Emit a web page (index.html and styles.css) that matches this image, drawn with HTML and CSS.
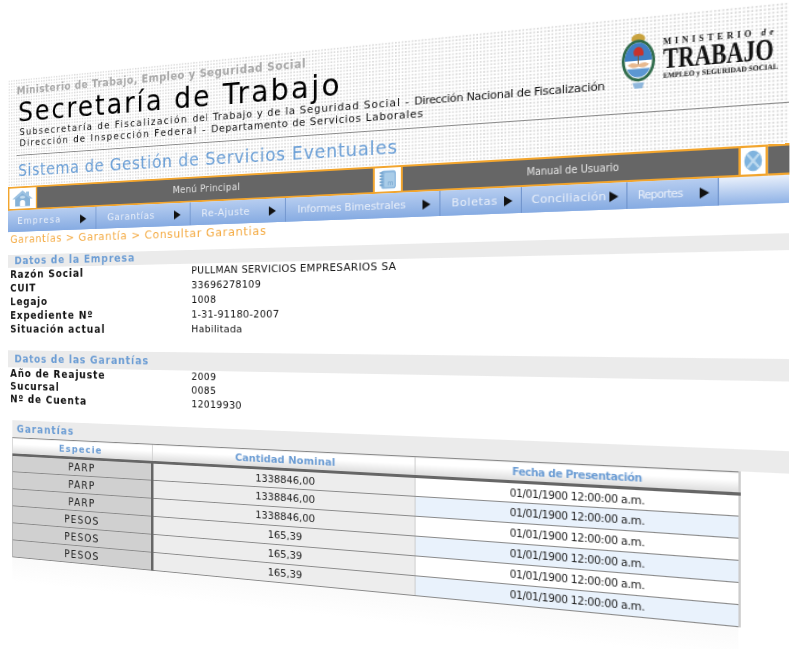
FILE: index.html
```html
<!DOCTYPE html>
<html lang="es">
<head>
  <meta charset="utf-8">
  <title>Consultar Garantías</title>
  <link rel="stylesheet" href="styles.css">
</head>
<body>
  <div class="stage">
    <div class="page">
      <header class="top">
        <p class="ministry">Ministerio de Trabajo, Empleo y Seguridad Social</p>
        <h1 class="title">Secretaría de Trabajo</h1>
        <p class="sub"><span class="wide">Subsecretaría de Fiscalización </span><span class="loose">del Trabajo y de la Seguridad Social - </span><span class="tight">Dirección Nacional de Fiscalización</span></p>
        <p class="sub"><span class="wide">Dirección de Inspección Federal - </span>Departamento de Servicios Laborales</p>
        <div class="rule"></div>
        <h2 class="system">Sistema de Gestión de Servicios Eventuales</h2>
        <div class="logo">
          <svg class="shield" viewBox="0 0 34 57" preserveAspectRatio="none">
            <ellipse cx="17" cy="6" rx="7" ry="5" fill="#c9a33f"/>
            <ellipse cx="17" cy="28" rx="17" ry="21" fill="#2f6b4a"/>
            <ellipse cx="17" cy="28" rx="14" ry="18" fill="#fff"/>
            <path d="M3 28a14 18 0 0 1 28 0z" fill="#3f7fc4"/>
            <path d="M5 36a14 18 0 0 0 24 0z" fill="#5c97d2"/>
            <path d="M17 32V15" stroke="#7a5a33" stroke-width="1"/>
            <path d="M12 20c0-5 5-7 8-5 2 2 3 5 2 8h-9z" fill="#c8322b"/>
            <path d="M6 32c4-3 8-2 11 0 3-2 7-3 11 0-3 3-7 4-11 2-3 2-8 1-11-2z" fill="#e8b98f"/>
            <path d="M11 50h12l-2 6h-8z" fill="#8fb7dc"/>
          </svg>
          <div class="logo-text">
            <span class="logo-min">MINISTERIO <i>de</i></span>
            <span class="logo-main">TRABAJO</span>
            <span class="logo-foot">EMPLEO y SEGURIDAD SOCIAL</span>
          </div>
        </div>
      </header>

      <div class="toolbar">
        <a class="tile tile-home">
          <svg viewBox="0 0 30 24" preserveAspectRatio="none">
            <path d="M15 1 1 13h4v10h20V13h4l-5-4V3h-4v2.500z" fill="#9cc2e2"/>
            <path d="M5 13 15 5l10 8v10H5z" fill="#86b2d8"/>
            <ellipse cx="15" cy="10.500" rx="3.500" ry="2" fill="#c4dcef"/>
            <path d="M11.500 23v-5a3.500 3.500 0 0 1 7 0v5z" fill="#fff"/>
          </svg>
        </a>
        <div class="bar bar-main">Menú Principal</div>
        <a class="tile tile-book">
          <svg viewBox="0 0 30 26" preserveAspectRatio="none">
            <rect x="5" y="1" width="22" height="24" rx="4" fill="#8db8de"/>
            <rect x="10" y="4" width="15" height="19" rx="2" fill="#a9cce8"/>
            <path d="M3 4h5M3 8h5M3 12h5M3 16h5M3 20h5" stroke="#6f9fca" stroke-width="2"/>
            <text x="19" y="21" class="tile-m">m</text>
          </svg>
        </a>
        <div class="bar bar-manual">Manual de Usuario</div>
        <a class="tile tile-globe">
          <svg viewBox="0 0 30 26" preserveAspectRatio="none">
            <circle cx="15" cy="13" r="12" fill="#7fb3de"/>
            <path d="m7 5 16 16M23 5 7 21" stroke="#bcd9ef" stroke-width="3"/>
          </svg>
        </a>
        <div class="bar bar-end"></div>
      </div>

      <nav class="nav">
        <a class="nav-item empresa">Empresa</a>
        <a class="nav-item garantias">Garantías</a>
        <a class="nav-item reajuste">Re-Ajuste</a>
        <a class="nav-item informes">Informes Bimestrales</a>
        <a class="nav-item boletas">Boletas</a>
        <a class="nav-item conciliacion">Conciliación</a>
        <a class="nav-item reportes">Reportes</a>
      </nav>

      <div class="crumbs">Garantías &gt; Garantía &gt; Consultar Garantias</div>

      <h3 class="band band-first">Datos de la Empresa</h3>
      <dl class="data data-company">
        <dt>Razón Social</dt><dd class="hidden-value">PULLMAN SERVICIOS EMPRESARIOS SA</dd>
        <dt>CUIT</dt><dd class="hidden-value">33696278109</dd>
        <dt>Legajo</dt><dd class="hidden-value">1008</dd>
        <dt>Expediente Nº</dt><dd class="hidden-value">1-31-91180-2007</dd>
        <dt>Situación actual</dt><dd>Habilitada</dd>
      </dl>

      <h3 class="band band-second">Datos de las Garantías</h3>
      <dl class="data data-deposit">
        <dt>Año de Reajuste</dt><dd>2009</dd>
        <dt>Sucursal</dt><dd>0085</dd>
        <dt>Nº de Cuenta</dt><dd class="hidden-value">12019930</dd>
      </dl>

      <h3 class="band band-table">Garantías</h3>
      <table class="grid">
        <thead>
          <tr><th class="col-kind">Especie</th><th class="col-amount">Cantidad Nominal</th><th class="col-date">Fecha de Presentación</th></tr>
        </thead>
        <tbody>
          <tr><td class="col-kind">PARP</td><td class="col-amount">1338846,00</td><td class="col-date">01/01/1900 12:00:00 a.m.</td></tr>
          <tr><td class="col-kind">PARP</td><td class="col-amount">1338846,00</td><td class="col-date">01/01/1900 12:00:00 a.m.</td></tr>
          <tr><td class="col-kind">PARP</td><td class="col-amount">1338846,00</td><td class="col-date">01/01/1900 12:00:00 a.m.</td></tr>
          <tr><td class="col-kind">PESOS</td><td class="col-amount">165,39</td><td class="col-date">01/01/1900 12:00:00 a.m.</td></tr>
          <tr><td class="col-kind">PESOS</td><td class="col-amount">165,39</td><td class="col-date">01/01/1900 12:00:00 a.m.</td></tr>
          <tr><td class="col-kind">PESOS</td><td class="col-amount">165,39</td><td class="col-date">01/01/1900 12:00:00 a.m.</td></tr>
        </tbody>
      </table>
      <div class="fade"></div>
    </div>
  </div>
</body>
</html>
```

FILE: styles.css
```css
html, body {
  margin: 0;
  padding: 0;
  background: #fff;
}
.stage {
  width: 790px;
  height: 649px;
  overflow: hidden;
}
/* the whole page is one sheet seen in perspective */
.page {
  width: 818px;
  font-family: "DejaVu Sans", Verdana, sans-serif;
  font-size: 11px;
  color: #222;
  transform-origin: 0 0;
  transform: matrix3d(0.72, -0.0963, 0, -0.000298, 0, 0.85, 0, 0, 0, 0, 1, 0, 8, 80, 0, 1);
}

/* header */
.top {
  position: relative;
  height: 126px;
  padding-top: 6px;
  box-sizing: border-box;
  background-color: #fff;
  background-image: radial-gradient(circle, #dadada 0.8px, transparent 1px);
  background-size: 3.4px 3.4px;
}
.ministry {
  margin: 0;
  padding-left: 12px;
  font-size: 12px;
  line-height: 16px;
  font-weight: bold;
  letter-spacing: 0.5px;
  color: #a9a9a9;
}
.title {
  margin: 0;
  padding-left: 14px;
  font-size: 32px;
  line-height: 34px;
  font-weight: normal;
  letter-spacing: 2.5px;
  color: #000;
}
.sub {
  margin: 0;
  padding-left: 16px;
  line-height: 13px;
  letter-spacing: 0.7px;
  color: #111;
  white-space: nowrap;
}
.wide {
  letter-spacing: 1.7px;
}
.loose {
  letter-spacing: 0.95px;
}
.tight {
  letter-spacing: -0.3px;
}
.rule {
  margin: 7px 0 0 12px;
  border-top: 1px solid #8a8a8a;
}
.system {
  margin: 0;
  padding-left: 14px;
  font-size: 19px;
  line-height: 34px;
  font-weight: normal;
  letter-spacing: 0.8px;
  color: #6b9fd6;
}

/* logo */
.logo {
  position: absolute;
  top: 15px;
  left: 678px;
  display: flex;
  gap: 7px;
}
.shield {
  width: 29px;
  height: 53px;
}
.logo-text {
  display: flex;
  flex-direction: column;
  width: 94px;
  font-family: "Liberation Serif", serif;
  color: #111;
  white-space: nowrap;
}
.logo-text span {
  display: block;
  transform-origin: 0 0;
}
.logo-min {
  margin-top: 7px;
  font-size: 7.5px;
  line-height: 8px;
  letter-spacing: 3px;
  font-weight: bold;
}
.logo-main {
  font-size: 27px;
  line-height: 22px;
  font-weight: bold;
  transform: scaleX(0.71);
}
.logo-foot {
  margin-top: 1px;
  font-size: 7px;
  line-height: 8px;
  font-weight: bold;
  transform: scaleX(0.88);
}

/* dark bar with icon tiles */
.toolbar {
  display: flex;
  height: 28px;
}
.tile {
  flex: none;
  box-sizing: border-box;
  padding: 2px 3px;
  background: #fff;
  border: 2px solid #f2a52e;
}
.tile svg {
  display: block;
  width: 100%;
  height: 100%;
}
.tile-m {
  font-size: 9px;
  text-anchor: middle;
  fill: #6f9fca;
}
.tile-home { width: 40px; }
.tile-book { width: 31px; }
.tile-globe { width: 24px; padding: 2px 1px; }
.bar {
  box-sizing: border-box;
  background: #666;
  border-top: 2px solid #f2a52e;
  border-bottom: 2px solid #f2a52e;
  color: #e6e6e6;
  font-size: 10px;
  line-height: 24px;
  text-align: center;
}
.bar-main {
  width: 399px;
  padding-left: 28px;
  letter-spacing: 0.5px;
}
.bar-manual {
  width: 307px;
  padding-left: 20px;
  font-family: "DejaVu Sans Condensed", "DejaVu Sans", sans-serif;
}
.bar-end {
  flex: 1;
}

/* blue menu */
.nav {
  display: flex;
  height: 25px;
  background: linear-gradient(#e9f0fb, #8fb2e6);
}
.nav-item {
  display: flex;
  align-items: center;
  justify-content: space-between;
  box-sizing: border-box;
  padding: 0 11px 0 13px;
  background: linear-gradient(#b6cdf0, #86abe2);
  border-right: 1px solid #6f93cc;
  color: #e9eff9;
  font-size: 11px;
  white-space: nowrap;
}
.nav-item::after {
  content: "";
  border-left: 8px solid #111;
  border-top: 5px solid transparent;
  border-bottom: 5px solid transparent;
}
.empresa { width: 118px; padding-right: 12px; letter-spacing: 1.6px; }
.garantias { width: 117px; padding-left: 14px; letter-spacing: 0.7px; }
.reajuste { width: 110px; padding-right: 10px; letter-spacing: 0.5px; }
.informes { width: 163px; padding-right: 9px; letter-spacing: -0.1px; }
.boletas { width: 79px; padding: 0 8px 0 11px; letter-spacing: 0.6px; }
.conciliacion { width: 96px; padding: 0 7px 0 9px; letter-spacing: 0.2px; }
.reportes { width: 78px; padding: 0 7px 0 9px; font-family: "DejaVu Sans Condensed", "DejaVu Sans", sans-serif; letter-spacing: -0.7px; }

.crumbs {
  padding-left: 3px;
  font-size: 13px;
  line-height: 17px;
  letter-spacing: 0.8px;
  color: #f4a93f;
}

/* section bands */
.band {
  box-sizing: border-box;
  margin: 0;
  padding-left: 9px;
  background: #ebebeb;
  color: #6c9dd4;
  font-size: 12px;
  letter-spacing: 1px;
}
.band-first {
  height: 15px;
  margin-top: 10px;
  line-height: 15px;
}
.band-second {
  height: 20px;
  margin-top: 16px;
  line-height: 20px;
}
.band-table {
  height: 20px;
  margin: 17px 0 0 6px;
  padding-left: 6px;
  line-height: 20px;
  letter-spacing: 1.3px;
}

/* label / value rows */
.data {
  display: grid;
  grid-template-columns: 233px 1fr;
  margin: 0;
  padding-left: 3px;
  color: #111;
}
.data-company { grid-auto-rows: 16px; padding-top: 1px; }
.data-deposit { grid-auto-rows: 15px; }
.data dt {
  font-size: 12px;
  font-weight: bold;
  letter-spacing: 1.1px;
}
.data dd {
  margin: 0;
  letter-spacing: 0.4px;
  white-space: nowrap;
}
.hidden-value {
  filter: blur(0.6px);
}

/* table */
.grid {
  width: 771px;
  margin-left: 6px;
  border-collapse: collapse;
  table-layout: fixed;
}
.grid th, .grid td {
  height: 20px;
  padding: 0;
  box-sizing: border-box;
  text-align: center;
  font-size: 11px;
}
.grid th {
  background: linear-gradient(#fff 35%, #dcdcdc);
  border-top: 1px solid #888;
  border-left: 1px solid #ccc;
  border-bottom: 3px solid #666;
  color: #6c9dd4;
}
.grid td {
  border-bottom: 1px solid #8a8a8a;
}
.grid .col-kind { width: 182px; }
.grid .col-amount { width: 294px; padding-left: 16px; }
.grid .col-date {
  width: 295px;
  padding-left: 14px;
  font-family: "DejaVu Sans Condensed", "DejaVu Sans", sans-serif;
  letter-spacing: -0.3px;
  border-right: 2px solid #ccc;
}
.grid th.col-kind { letter-spacing: 1.4px; }
.grid th.col-amount { letter-spacing: 0.1px; }
.grid th.col-date { letter-spacing: -0.4px; }
.grid td.col-kind {
  padding-left: 4px;
  font-size: 12px;
  letter-spacing: 1.3px;
  background: #d0d0d0;
  border-left: 1px solid #999;
  border-right: 3px solid #666;
}
.grid td.col-amount {
  background: #ededed;
  border-right: 1px solid #ccc;
}
.grid td.col-date { background: #fff; }
.grid tbody tr:nth-child(even) td.col-date { background: #e9f2fc; }

.fade {
  width: 771px;
  height: 30px;
  margin-left: 6px;
  background: linear-gradient(#fafafa, #fff);
}
```
